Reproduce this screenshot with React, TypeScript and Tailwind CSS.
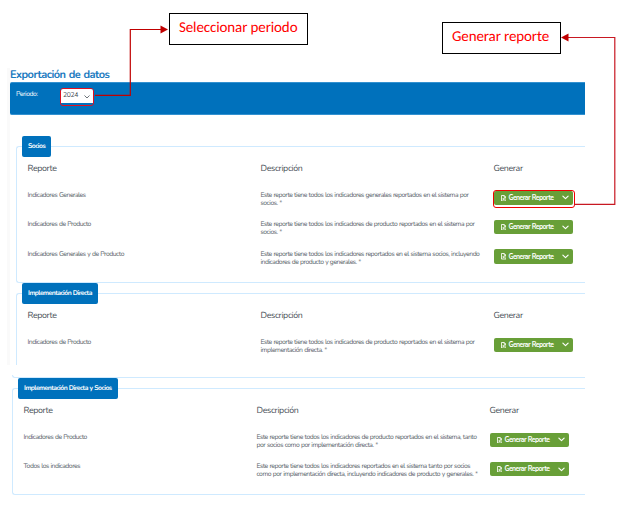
import React from "react";

type Row = { name: string; lines: string[]; marked?: boolean };

function FileIcon() {
  return (
    <svg viewBox="0 0 12 14" className="h-[6.5px] w-[5.5px]" fill="none" stroke="#fff" strokeWidth="1.9" strokeLinejoin="round">
      <path d="M1 1h6l4 4v8H1z" />
      <path d="M7 1v4h4M3.8 6.5l4 4.5M7.8 6.5l-4 4.5" />
    </svg>
  );
}

function Chevron({ className }: { className: string }) {
  return (
    <svg viewBox="0 0 12 8" className={className} fill="none" stroke="currentColor" strokeLinecap="round" strokeLinejoin="round">
      <path d="M1.5 1.5 6 6l4.500-4.500" />
    </svg>
  );
}

function ReportButton({ marked }: { marked?: boolean }) {
  return (
    <div className="relative mt-[0.7px] h-[15px] w-[79px]">
      <button className="flex h-[14.5px] w-[79px] items-center rounded-[2px] bg-[#689f38] pl-[7px] text-white">
        <FileIcon />
        <span className="ml-[2.5px] w-[53.5px] whitespace-nowrap pt-px text-left text-[6.8px] font-bold leading-none tracking-[-0.55px] [word-spacing:0.5px]">
          Generar Reporte
        </span>
        <Chevron className="h-[5px] w-[7px] stroke-[2]" />
      </button>
      {marked && <div className="absolute -left-[1px] -top-[1px] h-[18px] w-[82px] rounded-[3px] border border-[#f00000]" />}
    </div>
  );
}

function ReportTable({ rows }: { rows: Row[] }) {
  return (
    <div className="pl-[5.500px] text-[#5a636b]">
      <div className="grid h-[33px] grid-cols-[233px_233px_1fr] pt-[7px] text-[8.8px] leading-[11px] tracking-[-0.35px] text-[#495057]">
        <span>Reporte</span>
        <span>Descripción</span>
        <span>Generar</span>
      </div>
      {rows.map((row) => (
        <div key={row.lines.join()} className="grid h-[29.3px] grid-cols-[233px_233px_1fr] text-[6.8px] leading-[8px] tracking-[-0.47px] [word-spacing:0.4px]">
          <span className="pt-[2px]">{row.name}</span>
          <div className="whitespace-nowrap pt-[2px]">
            {row.lines.map((line) => (
              <p key={line}>{line}</p>
            ))}
          </div>
          <ReportButton marked={row.marked} />
        </div>
      ))}
    </div>
  );
}

function Group({ title, rows, className }: { title: string; rows: Row[]; className: string }) {
  return (
    <fieldset className={"rounded-l-[3px] border border-r-0 border-[#cfeaff] pl-[5px] " + className}>
      <legend className="flex h-[21px] items-center whitespace-nowrap rounded-[2px] bg-[#0071bc] px-[6px] pt-[1.5px] text-[6.8px] font-bold leading-none tracking-[-0.53px] text-white [word-spacing:0.4px]">
        {title}
      </legend>
      <ReportTable rows={rows} />
    </fieldset>
  );
}

const partnerRows: Row[] = [
  {
    name: "Indicadores Generales",
    lines: ["Este reporte tiene todos los indicadores generales reportados en el sistema por", "socios. *"],
    marked: true,
  },
  {
    name: "Indicadores de Producto",
    lines: ["Este reporte tiene todos los indicadores de producto reportados en el sistema por", "socios. *"],
  },
  {
    name: "Indicadores Generales y de Producto",
    lines: ["Este reporte tiene todos los indicadores reportados en el sistema socios, incluyendo", "indicadores de producto y generales. *"],
  },
];

const directRows: Row[] = [
  {
    name: "Indicadores de Producto",
    lines: ["Este reporte tiene todos los indicadores de producto reportados en el sistema por", "implementación directa. *"],
  },
];

const combinedRows: Row[] = [
  {
    name: "Indicadores de Producto",
    lines: ["Este reporte tiene todos los indicadores de producto reportados en el sistema, tanto", "por socios como por implementación directa. *"],
  },
  {
    name: "Todos los indicadores",
    lines: ["Este reporte tiene todos los indicadores reportados en el sistema tanto por socios", "como por implementación directa, incluyendo indicadores de producto y generales. *"],
  },
];

export default function App() {
  return (
    <div className="relative h-[522px] w-[633px] overflow-hidden bg-white font-['Nunito','Lato',sans-serif] [text-rendering:geometricPrecision]">
      <main className="w-[585px] pt-[68px]">
        <div className="ml-[7px] h-[297px] overflow-hidden border-l-[3px] border-[#fafafa]">
          <h1 className="h-[14px] whitespace-nowrap text-[11px] font-bold leading-[13px] tracking-[-0.52px] text-[#1b7ac0] [word-spacing:0.8px]">Exportación de datos</h1>
          <div className="flex h-[33px] rounded-l-[2px] border-y border-[#3391d0] bg-[#0071bc] pl-[6px] text-[6.8px] text-white">
            <span className="w-[44px] pt-[8px] leading-[8px] tracking-[-0.4px]">Periodo:</span>
            <div className="mt-[5px] flex h-[18px] w-[34px] flex-col overflow-hidden rounded-[3px] border border-[#e01020]">
              <div className="flex h-[14px] items-center justify-between bg-white pl-[2px] pr-[3px] pt-px text-[6.8px] leading-none tracking-[-0.3px] text-[#495057]">
                <span>2024</span>
                <Chevron className="h-[4px] w-[6px] stroke-[1.6]" />
              </div>
            </div>
          </div>
          <div className="pl-[6px] pt-[21px]">
            <Group title="Socios" rows={partnerRows} className="h-[147px]" />
            <Group title="Implementación Directa" rows={directRows} className="h-[94px]" />
          </div>
        </div>
        <div className="pl-[12px] pt-[10px]">
          <div className="h-[3px] rounded-bl-[3px] border-b border-l border-[#cfeaff]" />
          <Group title="Implementación Directa y Socios" rows={combinedRows} className="h-[117px]" />
        </div>
      </main>

      <div className="absolute left-[169px] top-[13px] flex h-[32px] w-[139px] border border-black bg-white pl-[9px] pt-[4px] font-['Carlito','Lato',sans-serif] text-[15px] leading-[20px] tracking-[-0.12px] text-[#ff0000]">
        <span className="whitespace-nowrap">Seleccionar periodo</span>
      </div>
      <div className="absolute left-[442px] top-[22px] flex h-[32px] w-[119px] border border-black bg-white pl-[9px] pt-[4px] font-['Carlito','Lato',sans-serif] text-[15px] leading-[20px] tracking-[-0.12px] text-[#ff0000]">
        <span className="whitespace-nowrap">Generar reporte</span>
      </div>
      <svg className="pointer-events-none absolute inset-0" width="633" height="522" fill="none">
        <path d="M95 95.300H130.300V29.500H162" stroke="#c00000" strokeWidth="1.200" />
        <path d="M160.500 25.500 168 29.500 160.500 33.500z" fill="#c00000" />
        <path d="M574 204.300H614.800V37.500H568" stroke="#c81822" strokeWidth="1.200" />
        <path d="M568.500 33.500 561 37.500 568.500 41.500z" fill="#c00000" />
      </svg>
    </div>
  );
}
